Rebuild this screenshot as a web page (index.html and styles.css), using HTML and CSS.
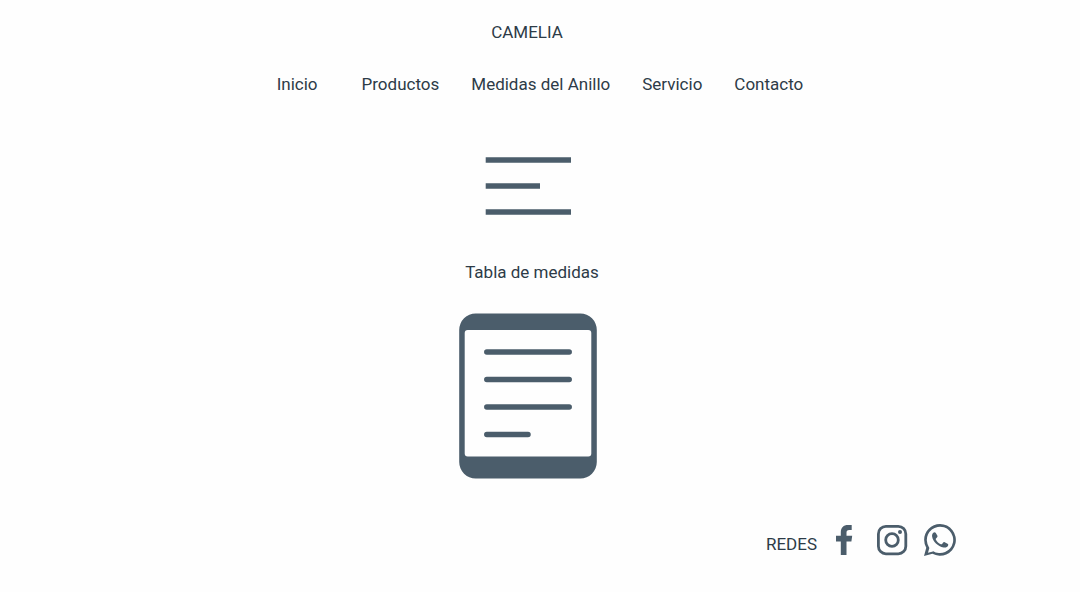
FILE: index.html
```html
<!DOCTYPE html>
<html lang="es">
<head>
<meta charset="utf-8">
<meta name="viewport" content="width=device-width, initial-scale=1">
<title>Camelia</title>
<link rel="stylesheet" href="styles.css">
</head>
<body>
<header class="header">
  <h1 class="title">CAMELIA</h1>
  <nav class="nav">
    <a class="nav-link nav-link-home" href="#">Inicio</a>
    <a class="nav-link" href="#">Productos</a>
    <a class="nav-link" href="#">Medidas del Anillo</a>
    <a class="nav-link" href="#">Servicio</a>
    <a class="nav-link" href="#">Contacto</a>
  </nav>
</header>
<main class="main">
  <svg class="lines-icon" viewBox="0 0 86 58" aria-hidden="true">
    <path d="M.7 .2H86v5.600H.7zM.7 26.200H55v5.600H.7zM.7 52.200H86v5.600H.7z"/>
  </svg>
  <h2 class="subtitle">Tabla de medidas</h2>
  <svg class="doc-icon" viewBox="0 0 138 166" aria-hidden="true">
    <path fill-rule="evenodd" d="M16.700 .5h104.600a16.500 16.500 0 0 1 16.500 16.500v132a16.500 16.500 0 0 1-16.500 16.500H16.700a16.500 16.500 0 0 1-16.500-16.500V17A16.500 16.500 0 0 1 16.700 .5zM8.700 17a3 3 0 0 0-3 3v120.500a3 3 0 0 0 3 3h120.600a3 3 0 0 0 3-3V20a3 3 0 0 0-3-3z"/>
    <path class="stroke" stroke-width="5.500" d="M27.800 39H110.200M27.800 66.500H110.200M27.800 94H110.200M27.800 121.500H69"/>
  </svg>
</main>
<footer class="footer">
  <span class="footer-label">REDES</span>
  <a class="social social-facebook" href="#" aria-label="Facebook">
    <svg width="17" height="32" viewBox="0 0 17 32" aria-hidden="true"><path d="M4.800 31V17.500H0V11.700H4.800V8.500C4.800 3.500 7.500 1 12 1h3.700v5h-2.500c-2 0-2.700 1-2.700 2.700v3h5.700l-.8 5.800h-4.900V31z"/></svg>
  </a>
  <a class="social social-instagram" href="#" aria-label="Instagram">
    <svg width="32" height="32" viewBox="0 0 32 32" aria-hidden="true">
      <rect class="stroke" x="2.400" y="2.400" width="27.400" height="27.400" rx="7.500" stroke-width="2.800"/>
      <circle class="stroke" cx="16" cy="16" r="6.300" stroke-width="2.800"/>
      <circle cx="24" cy="8" r="2"/>
    </svg>
  </a>
  <a class="social" href="#" aria-label="WhatsApp">
    <svg width="32" height="32" viewBox="0 0 32 32" aria-hidden="true">
      <path fill-rule="evenodd" d="M0 32l2.250-8.220A15.850 15.850 0 0 1 .13 15.860C.13 7.120 7.250 0 16 0a15.870 15.870 0 1 1-7.600 29.800zM8.800 26.930A13.180 13.180 0 1 0 4.840 22.880l.5 1-1.330 4.860 4.990-1.300z"/>
      <path d="M9.300 8.800c.9-.8 2-.7 2.500.2l1.500 2.600c.4.700.2 1.300-.4 1.900l-.9.900c-.4.400-.4.800-.1 1.300 1.200 2 2.800 3.500 4.900 4.500.5.300.9.200 1.300-.3l.9-1.200c.5-.6 1-.8 1.700-.4l2.800 1.500c.8.400.9 1 .6 1.800-.7 1.700-2.500 2.300-4.500 1.900C13.700 22.300 9 17.700 8.100 12.500 7.900 11 8.300 9.700 9.300 8.800z"/>
    </svg>
  </a>
</footer>
</body>
</html>
```
FILE: styles.css
```css
body {
  margin: 0;
  background: #fefefe;
  color: #2d3b47;
  font: 17px/24px Roboto, "Liberation Sans", sans-serif;
}

.header {
  padding-top: 20px;
}

.title,
.subtitle {
  margin: 0;
  font-size: inherit;
  font-weight: 400;
}

.title {
  padding-right: 26px;
  text-align: center;
}

.nav {
  display: flex;
  flex-wrap: wrap;
  justify-content: center;
  gap: 32px;
  margin-top: 28px;
}

.nav-link {
  color: inherit;
  text-decoration: none;
}

.nav-link-home {
  padding-right: 12px;
}

svg {
  display: block;
  fill: #4b5d6b;
}

.stroke {
  fill: none;
  stroke: #4b5d6b;
  stroke-linecap: round;
}

.main {
  display: flex;
  flex-direction: column;
  align-items: center;
  padding: 61px 24px 0 0;
}

.lines-icon {
  width: 86px;
  height: 58px;
}

.subtitle {
  margin-top: 45px;
  padding-left: 8px;
}

.doc-icon {
  width: 138px;
  height: 166px;
  margin-top: 29px;
}

.footer {
  display: flex;
  justify-content: flex-end;
  align-items: center;
  gap: 16px;
  padding: 45px 124px 36px 0;
}

.footer-label {
  padding-top: 8px;
}

.social-facebook {
  padding: 0 7px 0 3px;
}
```
